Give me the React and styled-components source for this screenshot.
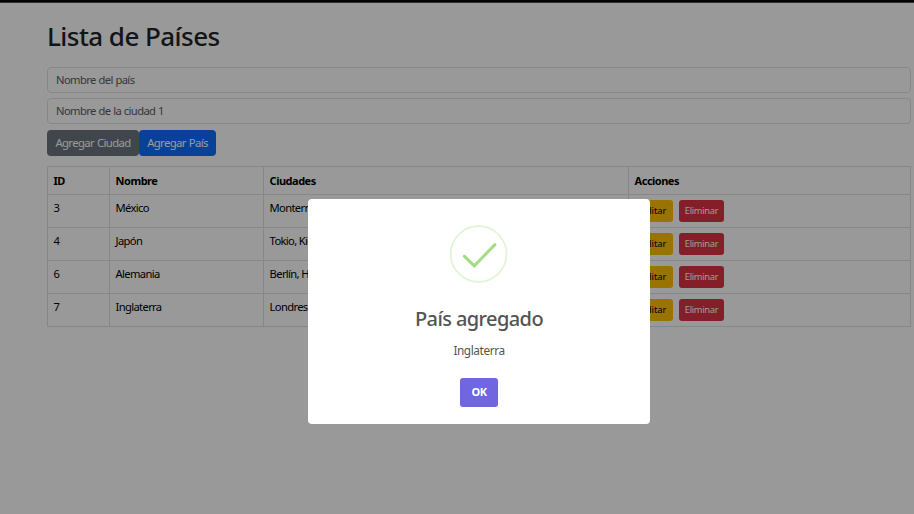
import React from "react";
import styled, { createGlobalStyle } from "styled-components";

const GlobalStyle = createGlobalStyle`
  *, *::before, *::after { box-sizing: border-box; }
  html, body { margin: 0; height: 100%; overflow: hidden; }
  body {
    background: #fff;
    color: #212529;
    font-family: "Noto Sans", "Open Sans", sans-serif;
    font-size: 11.2px;
    line-height: 17px;
  }
  button, input { font-family: inherit; }
`;

const Page = styled.div`
  height: 514px;
  border-top: 2px solid #050505;
`;

const TopRule = styled.div`
  height: 1px;
  background: #505050;
`;

const Container = styled.main`
  width: 864px;
  margin-left: 47px;
  padding-top: 17px;
`;

const Heading = styled.h1`
  margin: 0 0 14px;
  height: 33px;
  font-size: 26px;
  line-height: 33px;
  font-weight: 500;
  letter-spacing: -0.55px;
`;

const Fields = styled.div`
  display: flex;
  flex-direction: column;
  gap: 5px;
`;

const TextField = styled.input`
  width: 100%;
  height: 26px;
  padding: 0 8px 1px;
  border: 1px solid #dee2e6;
  border-radius: 4px;
  background: #fff;
  font-size: 11.2px;
  letter-spacing: -0.6px;
  word-spacing: 0.4px;
  &::placeholder { color: #595c5f; opacity: 1; }
`;

const Toolbar = styled.div`
  display: flex;
  margin: 6px 0 10px;
`;

const tones = {
  secondary: ["#6c757d", "#fff"],
  primary: ["#0d6efd", "#fff"],
  warning: ["#ffc107", "#000"],
  danger: ["#dc3545", "#fff"],
};

const Button = styled.button`
  width: ${(p) => p.$width}px;
  height: 26px;
  padding: 0;
  border: 0;
  border-radius: 4px;
  background: ${(p) => tones[p.$tone][0]};
  color: ${(p) => tones[p.$tone][1]};
  font-size: 11.3px;
  line-height: 26px;
  letter-spacing: -0.6px;
  word-spacing: 0.5px;
  white-space: nowrap;
`;

const SmallButton = styled(Button)`
  height: 22px;
  border-radius: 3px;
  font-size: 9.4px;
  line-height: 20px;
  letter-spacing: ${(p) => (p.$tone === "warning" ? 0 : -0.35)}px;
`;

const Table = styled.table`
  width: 864px;
  table-layout: fixed;
  border-collapse: collapse;
  color: #000;
`;

const Row = styled.tr`
  height: ${(p) => (p.$head ? 28 : 33)}px;
`;

const HeadCell = styled.th`
  padding: 0 5.6px;
  border: 1px solid #dee2e6;
  text-align: left;
  font-weight: 700;
  font-size: 11px;
  letter-spacing: -0.5px;
`;

const Cell = styled.td`
  padding: 5px ${(p) => (p.$actions ? 5 : 5.6)}px 0;
  border: 1px solid #dee2e6;
  vertical-align: top;
  line-height: 15px;
  letter-spacing: -0.65px;
`;

const Actions = styled.div`
  display: flex;
  gap: 6px;
`;

const Backdrop = styled.div`
  position: fixed;
  inset: 0;
  background: rgba(0, 0, 0, 0.4);
`;

const Dialog = styled.section`
  position: absolute;
  left: 308px;
  top: 199px;
  width: 342px;
  height: 225px;
  padding-top: 26px;
  display: flex;
  flex-direction: column;
  align-items: center;
  border-radius: 4px;
  background: #fff;
  color: #545454;
`;

const SuccessIcon = styled.svg`
  display: block;
  width: 58px;
  height: 58px;
`;

const DialogTitle = styled.h2`
  margin: 22px 0 0;
  font-size: 20px;
  line-height: 28px;
  font-weight: 500;
  letter-spacing: -0.6px;
`;

const DialogText = styled.p`
  margin: 8px 0 19px;
  font-size: 11.8px;
  line-height: 18px;
  letter-spacing: -0.4px;
`;

const ConfirmButton = styled.button`
  width: 38px;
  height: 29px;
  padding: 0 0 2px;
  border: 0;
  border-radius: 3px;
  background: #7066e0;
  color: #fff;
  font-size: 11px;
  font-weight: 700;
  line-height: 27px;
  letter-spacing: -0.6px;
`;

const countries = [
  { id: 3, name: "México", cities: "Monterrey" },
  { id: 4, name: "Japón", cities: "Tokio, Kioto" },
  { id: 6, name: "Alemania", cities: "Berlín, Hamburgo" },
  { id: 7, name: "Inglaterra", cities: "Londres" },
];

export default function App() {
  return (
    <>
      <GlobalStyle />
      <Page>
        <TopRule />
        <Container>
          <Heading>Lista de Países</Heading>
          <Fields>
            <TextField placeholder="Nombre del país" />
            <TextField placeholder="Nombre de la ciudad 1" />
          </Fields>
          <Toolbar>
            <Button $tone="secondary" $width={92}>Agregar Ciudad</Button>
            <Button $tone="primary" $width={77}>Agregar País</Button>
          </Toolbar>
          <Table>
            <colgroup>
              <col width="62" />
              <col width="154" />
              <col width="365" />
              <col width="282" />
            </colgroup>
            <thead>
              <Row $head>
                <HeadCell>ID</HeadCell>
                <HeadCell>Nombre</HeadCell>
                <HeadCell>Ciudades</HeadCell>
                <HeadCell>Acciones</HeadCell>
              </Row>
            </thead>
            <tbody>
              {countries.map((c) => (
                <Row key={c.id}>
                  <Cell>{c.id}</Cell>
                  <Cell>{c.name}</Cell>
                  <Cell>{c.cities}</Cell>
                  <Cell $actions>
                    <Actions>
                      <SmallButton $tone="warning" $width={39}>Editar</SmallButton>
                      <SmallButton $tone="danger" $width={45}>Eliminar</SmallButton>
                    </Actions>
                  </Cell>
                </Row>
              ))}
            </tbody>
          </Table>
        </Container>
      </Page>
      <Backdrop>
        <Dialog role="dialog">
          <SuccessIcon viewBox="0 0 58 58" fill="none">
            <circle cx="28.6" cy="29" r="27.9" stroke="#e1f4d6" strokeWidth="1.8" />
            <path d="M14.3 31.2 L24.3 40.9 L44.9 19.6" stroke="#a5dc86" strokeWidth="3" strokeLinecap="round" />
          </SuccessIcon>
          <DialogTitle>País agregado</DialogTitle>
          <DialogText>Inglaterra</DialogText>
          <ConfirmButton>OK</ConfirmButton>
        </Dialog>
      </Backdrop>
    </>
  );
}
